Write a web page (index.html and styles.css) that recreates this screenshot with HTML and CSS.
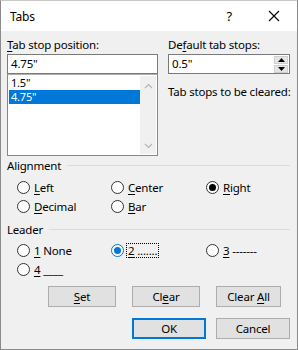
FILE: index.html
```html
<!DOCTYPE html>
<html lang="en">
<head>
    <meta charset="UTF-8">
    <title>Tabs</title>
    <link rel="stylesheet" href="styles.css">
</head>
<body>
    <div class="dialog">
        <div class="titlebar">
            <span class="title">Tabs</span>
            <span class="help">?</span>
            <span class="close">
                <svg width="12" height="12" viewBox="0 0 12 12"><path d="M1 1L11 11M11 1L1 11" stroke="#000" stroke-width="1.1" fill="none"/></svg>
            </span>
        </div>

        <div class="content">
            <div class="top">
                <div class="col">
                    <div class="label"><u>T</u>ab stop position:</div>
                    <div class="field">4.75"</div>
                    <div class="listbox">
                        <div class="items">
                            <div class="item">1.5"</div>
                            <div class="item selected">4.75"</div>
                        </div>
                        <div class="scroll">
                            <svg width="9" height="6" viewBox="0 0 9 6"><path d="M1 5L4.5 1.5L8 5" stroke="#b4b4b4" stroke-width="1.2" fill="none"/></svg>
                            <svg width="9" height="6" viewBox="0 0 9 6"><path d="M1 1L4.5 4.5L8 1" stroke="#b4b4b4" stroke-width="1.2" fill="none"/></svg>
                        </div>
                    </div>
                </div>
                <div class="col">
                    <div class="label">De<u>f</u>ault tab stops:</div>
                    <div class="field spin-field">
                        <span>0.5"</span>
                        <div class="spinner">
                            <div class="spin-btn"><svg width="7" height="4" viewBox="0 0 7 4"><path d="M0 4L3.5 0L7 4Z" fill="#000"/></svg></div>
                            <div class="spin-btn"><svg width="7" height="4" viewBox="0 0 7 4"><path d="M0 0L3.5 4L7 0Z" fill="#000"/></svg></div>
                        </div>
                    </div>
                    <div class="note">Tab stops to be cleared:</div>
                </div>
            </div>

            <div class="group-head align-head"><span>Alignment</span><div class="rule"></div></div>
            <div class="radios">
                <div class="radio"><span class="circle"></span><span><u>L</u>eft</span></div>
                <div class="radio"><span class="circle"></span><span><u>C</u>enter</span></div>
                <div class="radio"><span class="circle checked"></span><span><u>R</u>ight</span></div>
                <div class="radio"><span class="circle"></span><span><u>D</u>ecimal</span></div>
                <div class="radio"><span class="circle"></span><span><u>B</u>ar</span></div>
            </div>

            <div class="group-head leader-head"><span>Leader</span><div class="rule"></div></div>
            <div class="radios leader">
                <div class="radio"><span class="circle"></span><span><u>1</u> None</span></div>
                <div class="radio"><span class="circle focused"></span><span class="focus"><u>2</u> .......</span></div>
                <div class="radio"><span class="circle"></span><span><u>3</u> -------</span></div>
                <div class="radio"><span class="circle"></span><span><u>4</u> ____</span></div>
            </div>

            <div class="buttons first">
                <button class="btn"><u>S</u>et</button>
                <button class="btn">Cl<u>e</u>ar</button>
                <button class="btn narrow">Clear <u>A</u>ll</button>
            </div>
            <div class="buttons second">
                <button class="btn default">OK</button>
                <button class="btn">Cancel</button>
            </div>
        </div>
    </div>
</body>
</html>
```

FILE: styles.css
```css
body {
    margin: 0;
    font-family: "Noto Sans", "Open Sans", sans-serif;
    font-size: 11.5px;
    letter-spacing: -0.2px;
    color: #000;
}
u {
    text-decoration: underline;
    text-underline-offset: 2px;
}
.dialog {
    width: 298px;
    height: 350px;
    box-sizing: border-box;
    border: 1px solid #8a8a8a;
    border-top-color: #c8c8c8;
    background: #f0f0f0;
}
.titlebar {
    height: 30px;
    background: white;
    display: flex;
    align-items: center;
    padding-left: 9px;
}
.title {
    font-size: 12px;
    flex: 1;
}
.help {
    font-size: 13px;
    margin-right: 36px;
}
.close {
    display: flex;
    margin-right: 17px;
}
.content {
    padding: 7px 7px 0 6px;
}
.top {
    display: grid;
    grid-template-columns: 151px 122px;
    column-gap: 10px;
}
.label {
    line-height: 14px;
    margin-bottom: 2px;
}
.field {
    height: 20px;
    box-sizing: border-box;
    border: 1px solid #7a7a7a;
    background: white;
    padding: 0 3px;
    line-height: 18px;
}
.listbox {
    height: 82px;
    box-sizing: border-box;
    border: 1px solid #828790;
    border-top-color: #adadad;
    background: white;
    display: flex;
    padding: 1px;
}
.items {
    flex: 1;
}
.item {
    height: 14px;
    line-height: 14px;
    font-size: 11px;
    padding-left: 2px;
}
.item.selected {
    background: #0078d7;
    color: white;
}
.scroll {
    width: 16px;
    background: #f0f0f0;
    display: flex;
    flex-direction: column;
    justify-content: space-between;
    align-items: center;
    padding: 7px 0 5px;
}
.spin-field {
    display: flex;
    justify-content: space-between;
    padding-right: 1px;
}
.spinner {
    width: 14px;
    display: flex;
    flex-direction: column;
    gap: 1px;
    padding-top: 1px;
}
.spin-btn {
    height: 8px;
    background: #e5e5e5;
    border: 1px solid #cfcfcf;
    box-sizing: border-box;
    display: flex;
    align-items: center;
    justify-content: center;
}
.note {
    margin-top: 11px;
    line-height: 14px;
    white-space: nowrap;
}
.group-head {
    display: flex;
    align-items: center;
    gap: 6px;
    line-height: 15px;
}
.align-head {
    margin-top: 2px;
}
.leader-head {
    margin-top: 6px;
}
.rule {
    flex: 1;
    height: 1px;
    background: #dcdcdc;
}
.radios {
    display: grid;
    grid-template-columns: 94px 95px 1fr;
    grid-auto-rows: 19px;
    padding-left: 10px;
    margin-top: 5px;
}
.radios.leader {
    margin-top: 4px;
}
.radio {
    display: flex;
    align-items: center;
    gap: 4px;
}
.circle {
    width: 13px;
    height: 13px;
    box-sizing: border-box;
    border: 1px solid #333;
    border-radius: 50%;
    background: white;
    display: flex;
    align-items: center;
    justify-content: center;
}
.circle.checked::after,
.circle.focused::after {
    content: "";
    width: 7px;
    height: 7px;
    border-radius: 50%;
    background: #000;
}
.circle.focused {
    border-color: #0078d7;
}
.circle.focused::after {
    background: #0078d7;
}
.focus {
    border: 1px dotted #000;
    padding: 0 1px;
    line-height: 13px;
    margin-left: -2px;
}
.buttons {
    display: flex;
    gap: 10px;
}
.buttons.first {
    margin-top: 7px;
    padding-left: 41px;
    gap: 16px;
}
.buttons.second {
    margin-top: 11px;
    justify-content: flex-end;
}
.btn {
    width: 74px;
    height: 21px;
    font: inherit;
    letter-spacing: inherit;
    background: #e1e1e1;
    border: 1px solid #adadad;
    padding: 0;
    color: #000;
}
.buttons.first .btn {
    width: 68px;
}
.buttons.first .btn.narrow {
    width: 65px;
}
.btn.default {
    border: 2px solid #0078d7;
}
```
